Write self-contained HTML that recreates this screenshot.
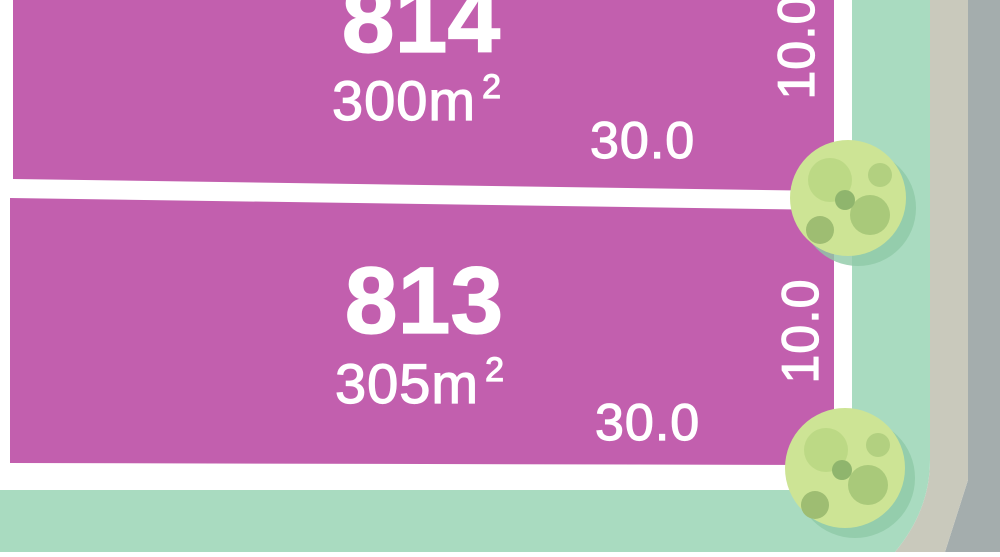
<!DOCTYPE html>
<html><head><style>html,body{margin:0;padding:0;overflow:hidden;background:#fff}</style></head>
<body>
<svg width="1000" height="552" viewBox="0 0 1000 552" xmlns="http://www.w3.org/2000/svg" font-family="Liberation Sans, sans-serif" fill="#fff">
<rect width="1000" height="552" fill="#fff"/>
<path d="M968,0 L1000,0 L1000,552 L945,552 L968,480 Z" fill="#a4adad"/>
<path d="M930,0 L968,0 L968,480 L945,552 L895,552 Q930,510 930,460 Z" fill="#c9c9bc"/>
<path d="M852,0 L930,0 L930,460 Q930,510 895,552 L0,552 L0,490 L852,490 Z" fill="#a9dbc0"/>
<path d="M13,0 L834,0 L834,191 L13,179 Z" fill="#c25fae"/>
<path d="M10,198 L834,210 L834,465 L10,463 Z" fill="#c25fae"/>
<g stroke="#fff" stroke-width="1.2">
<text x="421" y="52" font-size="95" font-weight="bold" text-anchor="middle">814</text>
<text x="332" y="120" font-size="56" letter-spacing="1">300m<tspan font-size="34" dx="6" dy="-22">2</tspan></text>
<text x="590" y="158" font-size="52" letter-spacing="1">30.0</text>
<text transform="translate(814,47) rotate(-90)" font-size="52" text-anchor="middle" letter-spacing="1">10.0</text>
<text x="424" y="333" font-size="95" font-weight="bold" text-anchor="middle">813</text>
<text x="335" y="403" font-size="56" letter-spacing="1">305m<tspan font-size="34" dx="6" dy="-22">2</tspan></text>
<text x="595" y="440" font-size="52" letter-spacing="1">30.0</text>
<text transform="translate(818,331) rotate(-90)" font-size="52" text-anchor="middle" letter-spacing="1">10.0</text>
</g>
<g>
<circle cx="858" cy="208" r="58" fill="#8fc9a6" opacity="0.8"/>
<circle cx="848" cy="198" r="58" fill="#cde495"/>
<circle cx="830" cy="180" r="22" fill="#bcd985"/>
<circle cx="870" cy="215" r="20" fill="#a9c97a"/>
<circle cx="845" cy="200" r="10" fill="#8fb56d"/>
<circle cx="820" cy="230" r="14" fill="#9ebd72"/>
<circle cx="880" cy="175" r="12" fill="#b2d080"/>
</g>
<g>
<circle cx="855" cy="478" r="60" fill="#8fc9a6" opacity="0.8"/>
<circle cx="845" cy="468" r="60" fill="#cde495"/>
<circle cx="826" cy="450" r="22" fill="#bcd985"/>
<circle cx="868" cy="485" r="20" fill="#a9c97a"/>
<circle cx="842" cy="470" r="10" fill="#8fb56d"/>
<circle cx="815" cy="505" r="14" fill="#9ebd72"/>
<circle cx="878" cy="445" r="12" fill="#b2d080"/>
</g>
</svg>
</body></html>
